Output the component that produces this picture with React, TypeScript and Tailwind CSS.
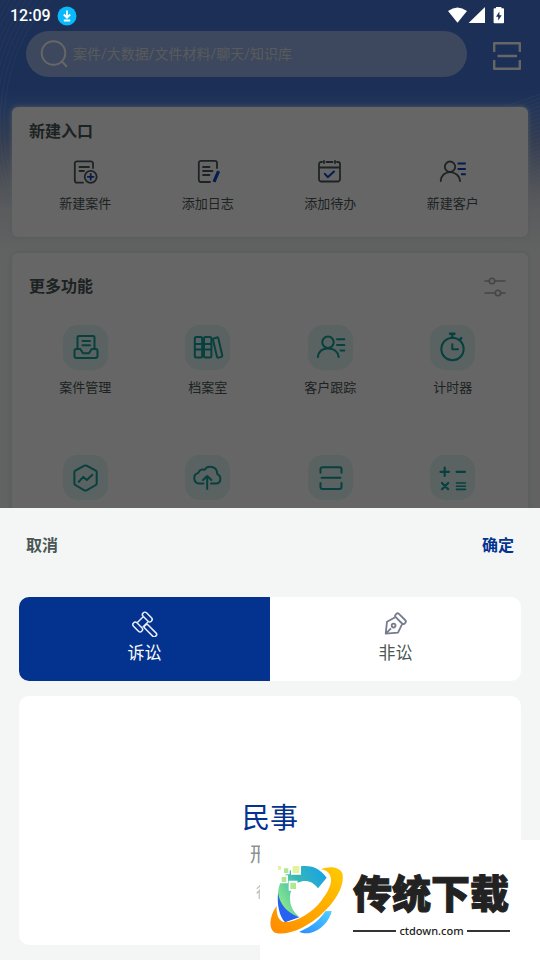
import type { ReactNode } from "react";

type Entry = { label: string; icon: ReactNode; hideLabel?: boolean };

const accent = "#0c46c8";

function LineIcon({ children }: { children: ReactNode }) {
  return (
    <svg viewBox="0 0 28 28" className="size-7" fill="none" stroke="#4a5857" strokeWidth="1.8" strokeLinecap="round" strokeLinejoin="round" aria-hidden="true">
      {children}
    </svg>
  );
}

function TileIcon({ children }: { children: ReactNode }) {
  return (
    <span className="block size-[45px] rounded-[15px] bg-[#e1f5f5]">
      <svg viewBox="0 0 45 45" className="size-full" fill="none" stroke="#12a19b" strokeWidth="2" strokeLinecap="round" strokeLinejoin="round" aria-hidden="true">
        {children}
      </svg>
    </span>
  );
}

const createEntries: Entry[] = [
  {
    label: "新建案件",
    icon: (
      <LineIcon>
        <path d="M22 10V5.5A2.2 2.2 0 0 0 19.8 3.3H6A2.2 2.2 0 0 0 3.8 5.5V22.5A2.2 2.2 0 0 0 6 24.7H12" />
        <path d="M8.5 9H18M8.5 13H13" />
        <circle cx="19.700" cy="18.800" r="6" />
        <path d="M16.8 18.8H22.6M19.7 15.9V21.7" stroke={accent} />
      </LineIcon>
    ),
  },
  {
    label: "添加日志",
    icon: (
      <LineIcon>
        <path d="M23 10V5A2.2 2.2 0 0 0 20.8 2.8H7A2.2 2.2 0 0 0 4.8 5V21.8A2.2 2.2 0 0 0 7 24H16" />
        <path d="M9 9H15.5M9 13H18.5M9 17H15.5" />
        <path d="M24.6 13.2L20 23.8" stroke={accent} strokeWidth="3.2" strokeLinecap="butt" />
      </LineIcon>
    ),
  },
  {
    label: "添加待办",
    icon: (
      <LineIcon>
        <path d="M6 4H5.2A2.2 2.2 0 0 0 3 6.2V21.3A2.2 2.2 0 0 0 5.2 23.5H21.8A2.2 2.2 0 0 0 24 21.3V6.2A2.2 2.2 0 0 0 21.8 4H21M10.5 4H16.5M3 9.5H24" />
        <path d="M8 2.8V5M19 2.8V5" />
        <path d="M8.8 15.8L11.8 19.2L18 13.5" stroke={accent} strokeWidth="2" />
      </LineIcon>
    ),
  },
  {
    label: "新建客户",
    icon: (
      <LineIcon>
        <circle cx="11" cy="8.7" r="5.2" />
        <path d="M1.7 23C2 17.5 6 14.2 11 14.2S20.6 17.5 21 23" />
        <path d="M18.6 5.5H26.8M18.6 11H26.8M22 16.3H26.8" stroke={accent} strokeLinecap="butt" strokeWidth="2" />
      </LineIcon>
    ),
  },
];

const features: Entry[] = [
  {
    label: "案件管理",
    icon: (
      <TileIcon>
        <path d="M14.5 23V12.5A1.5 1.5 0 0 1 16 11H30A1.5 1.5 0 0 1 31.5 12.5V23M19.5 16H27M19.5 20.3H27" />
        <path d="M13.5 24H17.3L20 28.3H26L28.7 24H32.5A2 2 0 0 1 34.5 26V31A2 2 0 0 1 32.5 33H13.5A2 2 0 0 1 11.5 31V26A2 2 0 0 1 13.5 24Z" />
      </TileIcon>
    ),
  },
  {
    label: "档案室",
    icon: (
      <TileIcon>
        <rect x="9.8" y="12" width="7.4" height="20.5" rx="1.5" />
        <rect x="19" y="12" width="7.4" height="20.5" rx="1.5" />
        <path d="M10 19H17M10 24.5H17M19 19H26M19 24.5H26" />
        <path d="M27.8 14L32 12.4Q33 12.2 33.3 13.2L37.3 30.5Q37.5 31.6 36.5 31.9L33.5 32.6Q32.3 32.8 32 31.8Z" />
      </TileIcon>
    ),
  },
  {
    label: "客户跟踪",
    icon: (
      <TileIcon>
        <circle cx="20" cy="17.3" r="5.7" />
        <path d="M9.8 32C10.5 26.5 14.5 23.4 20 23.4S30 26.5 30.7 32" />
        <path d="M29 14.3H36.3M29 20H36.3M32.5 25.4H36.3" />
      </TileIcon>
    ),
  },
  {
    label: "计时器",
    icon: (
      <TileIcon>
        <circle cx="22.5" cy="24" r="11.2" />
        <path d="M20 8.8H24.5M22.3 9V12.5M31.3 13L29.8 15" strokeWidth="2.4" />
        <path d="M22.3 19.3V24.2H28" />
      </TileIcon>
    ),
  },
  {
    label: "数据分析",
    hideLabel: true,
    icon: (
      <TileIcon>
        <path d="M21.4 10.7Q22.5 10.2 23.6 10.7L32.8 15.7Q33.7 16.3 33.7 17.2V28.5Q33.7 29.5 32.8 30L23.6 35.3Q22.5 35.8 21.4 35.3L12.3 30Q11.4 29.5 11.4 28.5V17.2Q11.4 16.3 12.3 15.7Z" />
        <path d="M15.8 26.8L20.3 21.9L23.8 25L29.4 19.8" />
      </TileIcon>
    ),
  },
  {
    label: "上传",
    hideLabel: true,
    icon: (
      <TileIcon>
        <path d="M18.5 28.5H14.2A5.4 5.4 0 0 1 13.3 17.9C14 15 17 13.8 19.7 14.7C22.5 10.3 32.3 10.6 32.3 19.2C36.8 21.2 36.3 28.5 31 28.5H26" />
        <path d="M22.2 34V21.3M18 25L22.2 21L26.4 25" />
      </TileIcon>
    ),
  },
  {
    label: "扫描",
    hideLabel: true,
    icon: (
      <TileIcon>
        <path d="M12.5 17.8V14.2A2 2 0 0 1 14.5 12.2H31.5A2 2 0 0 1 33.5 14.2V17.8M12.5 28V32A2 2 0 0 0 14.5 34H31.5A2 2 0 0 0 33.5 32V28M13.6 22.7H32.4" />
      </TileIcon>
    ),
  },
  {
    label: "计算器",
    hideLabel: true,
    icon: (
      <TileIcon>
        <path d="M10.5 16.8H19M14.7 12.6V21M26.5 16.8H35M12 28L18.2 34.2M18.2 28L12 34.2" strokeWidth="2.2" />
        <path d="M26.5 28H35.5M26.5 31.2H35.5M26.5 34.4H35.5" strokeWidth="1.6" />
      </TileIcon>
    ),
  },
];

function EntryButton({ entry }: { entry: Entry }) {
  return (
    <button type="button" aria-label={entry.label} className="flex flex-col items-center gap-2">
      {entry.icon}
      <span className="h-5 text-[13px] leading-5">{entry.hideLabel ? "" : entry.label}</span>
    </button>
  );
}

function StatusBar() {
  return (
    <div className="relative z-20 flex h-[31px] items-center pr-9 pl-[10px] text-white">
      <span className="font-[Roboto] text-base font-medium">12:09</span>
      <svg viewBox="0 0 20 20" className="ml-1.5 size-5" aria-hidden="true">
        <circle cx="10" cy="10" r="9.5" fill="#08b9fc" />
        <path d="M10 4.5V11M6.8 8.5L10 11.7L13.2 8.5M6.8 14.5H13.2" fill="none" stroke="#fff" strokeWidth="1.8" />
      </svg>
      <svg viewBox="0 0 58 18" className="ml-auto h-[18px] w-[58px]" fill="currentColor" aria-hidden="true">
        <path d="M2 4Q11.5-3.2 21 4L11.5 15.8Z" />
        <path d="M39 0V16H22.6Z" />
        <path fillRule="evenodd" d="M50 0H55.4V1.300H57.200Q58 1.300 58 2.100V15.400Q58 16.200 57.200 16.200H48.400Q47.600 16.200 47.600 15.400V2.100Q47.600 1.300 48.400 1.300H50ZM53.400 4.500L50 9.700H52.200V13.500L55.700 8.200H53.400Z" />
      </svg>
    </div>
  );
}

function ContourLines() {
  const rings = Array.from({ length: 28 }, (_, i) => 108 + i * 4);
  return (
    <svg viewBox="0 0 540 250" preserveAspectRatio="none" className="absolute inset-x-0 -top-[31px] -z-10 h-[250px] w-full" fill="none" stroke="#fff" strokeOpacity="0.13" aria-hidden="true">
      <clipPath id="left-edge">
        <path d="M0 0H75L12 110V195H0Z" />
      </clipPath>
      {rings.map((r) => (
        <ellipse key={r} cx="112" cy="125" rx={r} ry={r * 1.4} clipPath="url(#left-edge)" />
      ))}
      {rings.map((r) => (
        <path key={r} d={`M504 ${r - 2}Q522 ${r - 6} 540 ${r - 14}`} />
      ))}
    </svg>
  );
}

function HomePage() {
  return (
    <div className="relative z-0 text-[#4a5655]">
      <ContourLines />
      <form className="flex items-center gap-[26px] pr-[19px] pl-[26px]">
        <label className="flex h-[46px] min-w-0 flex-1 items-center rounded-full bg-white/45 pl-[14px]">
          <svg viewBox="0 0 28 28" className="size-7 shrink-0" fill="none" stroke="#fff" strokeWidth="2" strokeLinecap="round" aria-hidden="true">
            <circle cx="13.500" cy="13" r="11.800" />
            <path d="M22 21.500L26.300 26.200" />
          </svg>
          <input type="search" aria-label="搜索" placeholder="案件/大数据/文件材料/聊天/知识库" className="ml-[5px] min-w-0 flex-1 bg-transparent text-sm outline-none placeholder:text-[#dfe2e5]" />
        </label>
        <button type="button" aria-label="扫一扫" className="pt-1">
          <svg viewBox="0 0 28 28" className="size-7" fill="none" stroke="#fff" strokeWidth="2.400" strokeLinejoin="round" aria-hidden="true">
            <path d="M1.200 10V1.200H26.800V10M1.200 18V26.800H26.800V18M4.500 14H24" />
          </svg>
        </button>
      </form>

      <section className="mx-3 mt-[30px] rounded-md bg-white pt-[13px] pr-[14px] pb-[23px] pl-3 shadow-[0_0_5px_#cfe4e6]">
        <h2 className="px-[5px] text-base leading-6 font-bold">新建入口</h2>
        <div className="mt-[14px] grid grid-cols-4">
          {createEntries.map((entry) => (
            <EntryButton key={entry.label} entry={entry} />
          ))}
        </div>
      </section>

      <section className="mx-3 mt-4 rounded-md bg-white pt-[22px] pr-[14px] pb-6 pl-3 shadow-[0_0_5px_#cfe4e6]">
        <div className="flex items-center justify-between px-[5px] pr-2">
          <h2 className="text-base leading-6 font-bold">更多功能</h2>
          <button type="button" aria-label="设置">
            <svg viewBox="0 0 22 20" className="h-5 w-[22px]" fill="none" stroke="#a9acb4" strokeWidth="1.600" strokeLinecap="round" aria-hidden="true">
              <path d="M1 4H5M11 4H21M1 16H11M17 16H21" />
              <circle cx="8" cy="4" r="2.700" />
              <circle cx="14" cy="16" r="2.700" />
            </svg>
          </button>
        </div>
        <div className="mt-[26px] grid grid-cols-4 gap-y-[57px]">
          {features.map((entry) => (
            <EntryButton key={entry.label} entry={entry} />
          ))}
        </div>
      </section>
    </div>
  );
}

function GavelIcon() {
  return (
    <svg viewBox="0 0 28 28" className="size-7" fill="none" stroke="#e9eefa" strokeWidth="1.500" strokeLinejoin="round" aria-hidden="true">
      <rect x="10.500" y="5.600" width="11.600" height="4.800" rx="2.300" transform="rotate(45 16.300 8)" />
      <rect x="0.900" y="15.600" width="11.600" height="4.800" rx="2.300" transform="rotate(45 6.700 18)" />
      <path d="M12.200 7.700L6.400 13.500M17 13L11.700 18.200" />
      <rect x="12" y="19.400" width="15" height="4.600" rx="1.800" transform="rotate(45 19.500 21.700)" />
    </svg>
  );
}

function PenIcon() {
  return (
    <svg viewBox="0 0 28 28" className="size-7" fill="none" stroke="#777b8e" strokeWidth="1.800" strokeLinejoin="round" aria-hidden="true">
      <rect x="12.200" y="7.400" width="12.600" height="4.600" rx="1.800" transform="rotate(45 18.500 9.700)" />
      <path d="M13.200 8.300L5 12.700L3.700 24.700L16 23.600L20 15.300M3.700 24.700L9 19.300" />
      <circle cx="11.600" cy="16.600" r="1.900" />
    </svg>
  );
}

function CaseTypeSheet() {
  return (
    <div role="dialog" aria-label="案件类型" className="absolute inset-x-0 bottom-0 z-20 bg-[#f3f6f5] px-[19px] pt-[26px] pb-[15px]">
      <div className="flex justify-between px-[7px] text-base leading-6 font-bold">
        <button type="button" className="text-[#4a5655]">取消</button>
        <button type="button" className="text-[#04338f]">确定</button>
      </div>
      <div role="tablist" className="mt-[39px] grid h-[84px] grid-cols-2 overflow-hidden rounded-[10px] bg-white text-[17px] leading-6">
        <button type="button" role="tab" aria-selected="true" className="flex flex-col items-center gap-1 bg-[#04338f] pt-3 text-white">
          <GavelIcon />
          诉讼
        </button>
        <button type="button" role="tab" aria-selected="false" className="flex flex-col items-center gap-1 pt-3 text-[#4a5655]">
          <PenIcon />
          非讼
        </button>
      </div>
      <div className="mt-[15px] flex h-[249px] flex-col items-center overflow-hidden rounded-[10px] bg-white pt-[104px] text-[#8c9392]">
        <button type="button" aria-pressed="true" className="text-[28px] leading-[37px] text-[#04338f]">民事</button>
        <button type="button" className="text-xl leading-[37px]">刑事</button>
        <button type="button" className="text-sm leading-[37px] text-[#b5b9b8]">行政</button>
      </div>
    </div>
  );
}

function SwirlLogo() {
  return (
    <svg viewBox="204 252 228 216" className="h-[72px] w-[76px] shrink-0" aria-hidden="true">
      <defs>
        <linearGradient id="swirl-top" x1="0" y1="0.600" x2="1" y2="0">
          <stop offset="0" stopColor="#86e58b" />
          <stop offset="0.450" stopColor="#35b7b8" />
          <stop offset="1" stopColor="#129fee" />
        </linearGradient>
        <linearGradient id="swirl-ring" x1="0" y1="1" x2="1" y2="0">
          <stop offset="0" stopColor="#ff8a00" />
          <stop offset="1" stopColor="#ffca00" />
        </linearGradient>
        <linearGradient id="swirl-tail" x1="0" y1="1" x2="1" y2="0">
          <stop offset="0" stopColor="#2d8cff" />
          <stop offset="1" stopColor="#4fd0ff" />
        </linearGradient>
      </defs>
      <path fill="url(#swirl-top)" d="M234 345C235 290 275 258 315 258C345 258 365 272 380 293L354 325C342 307 322 300 306 304C280 310 268 335 270 360C272 385 285 400 298 411C262 405 234 385 234 345Z" />
      <path fill="#2563f0" d="M234 338C240 375 262 398 298 412L255 427C238 408 231 375 234 338Z" />
      <path fill="url(#swirl-tail)" d="M298 455C338 440 362 415 376 394L395 393C388 425 362 452 330 459C318 461 305 459 298 455Z" />
      <path fill="url(#swirl-ring)" d="M362 268C385 258 417 258 427 280C436 320 400 375 350 415C310 447 260 468 225 458C205 448 207 410 230 377C229 400 232 418 250 426C285 429 335 400 364 362C396 322 402 290 380 274C374 270 368 268 362 268Z" />
      <g fill="#fff">
        <path d="M230 255H246V272H230ZM248 261H269V283H248ZM273 253H303V284H273ZM240 286H264V310H240ZM266 302H293V332H266Z" />
        <path fill="#e4f39a" d="M234 258H243V269H234ZM278 258H298V279H278Z" />
        <path fill="#b0e88e" d="M252 265H265V279H252ZM245 291H259V306H245ZM271 308H288V327H271Z" />
      </g>
    </svg>
  );
}

function SiteBadge() {
  return (
    <aside className="absolute right-0 bottom-0 z-30 flex h-[120px] w-[280px] items-center bg-white pl-2 text-[#222]">
      <SwirlLogo />
      <div className="mt-[5px] ml-[9px] w-[157px]">
        <p className="text-[39px] leading-[56px] font-black whitespace-nowrap [-webkit-text-stroke:1px_#222]">传统下载</p>
        <p className="flex items-center gap-[3px] font-['Noto_Sans'] text-[11px] leading-4 font-medium before:h-[2px] before:flex-1 before:bg-[#333] after:h-[2px] after:flex-1 after:bg-[#333]">
          ctdown.com
        </p>
      </div>
    </aside>
  );
}

export default function App() {
  return (
    <main className="relative h-screen overflow-hidden bg-[#f2f4f3] bg-[linear-gradient(180deg,#4476da_0,#4476da_88px,#5584e0_106px,#7f99cc_140px,#c0c8da_180px,#e2e5ea_210px,#f2f4f3_250px)] font-['Roboto','Noto_Sans_CJK_SC',sans-serif]">
      <StatusBar />
      <HomePage />
      <div className="absolute inset-0 z-10 bg-black/60" />
      <CaseTypeSheet />
      <SiteBadge />
    </main>
  );
}
